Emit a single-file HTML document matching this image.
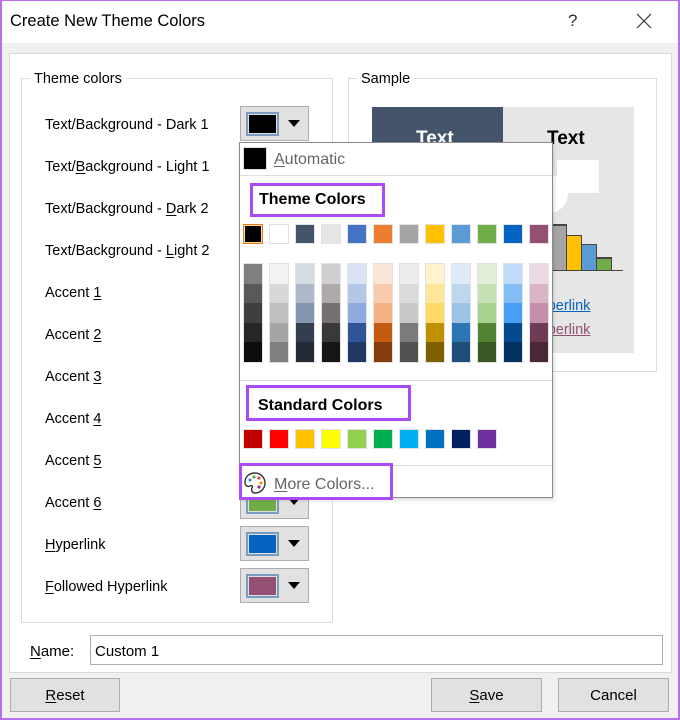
<!DOCTYPE html>
<html><head><meta charset="utf-8"><style>
*{margin:0;padding:0;box-sizing:border-box}
body{width:680px;height:720px;overflow:hidden;background:#f0f0f0;font-family:"Liberation Sans",sans-serif;font-size:14.5px;color:#000;position:relative}
.a{position:absolute}
.frame{left:0;top:0;width:680px;height:720px;border:2px solid #b56ff0;border-top-width:1px}
u{text-decoration:underline;text-underline-offset:2px}
.lbl{position:absolute;left:45px;white-space:nowrap}
.btn{position:absolute;left:240px;width:69px;height:35px;background:#e1e1e1;border:1px solid #adadad}
.btn .sw{position:absolute;left:5px;top:5px;width:33px;height:24px;border:2px solid #7a9cc0;}
.btn .sw i{position:absolute;left:1px;top:1px;right:1px;bottom:1px;border:0}
.btn .ar{position:absolute;left:47px;top:13px;width:0;height:0;border-left:6px solid transparent;border-right:6px solid transparent;border-top:7px solid #000}
.s{position:absolute;width:20px;height:20px;border:1px solid #e2e2e2}
.col{position:absolute;top:263px;width:20px;height:100px;border:1px solid #e2e2e2}
.col i{display:block;height:19.6px}
.pb{position:absolute;border:3px solid #a94cf7}
.pushb{position:absolute;top:678px;height:34px;background:#e1e1e1;border:1px solid #adadad;text-align:center;line-height:34px;font-size:15px}
</style></head><body>
<div class="a" style="left:0;top:0;width:680px;height:43px;background:#fff"></div>
<div class="a" style="left:10px;top:12px;font-size:16.5px">Create New Theme Colors</div>
<div class="a" style="left:568px;top:11px;font-size:17px;color:#333">?</div>
<svg class="a" style="left:636px;top:13px" width="16" height="16"><path d="M1 1L15 15M15 1L1 15" stroke="#333" stroke-width="1.2"/></svg>

<div class="a" style="left:9px;top:53px;width:663px;height:620px;background:#fff;border:1px solid #d9d9d9"></div>
<div class="a" style="left:21px;top:78px;width:312px;height:545px;border:1px solid #dcdcdc"></div>
<div class="a" style="left:30px;top:71px;background:#fff;padding:0 4px">Theme colors</div>
<div class="a" style="left:348px;top:78px;width:309px;height:294px;border:1px solid #dcdcdc"></div>
<div class="a" style="left:357px;top:71px;background:#fff;padding:0 4px">Sample</div>

<!-- sample preview -->
<div class="a" style="left:372px;top:107px;width:131px;height:246px;background:#44546a"></div>
<div class="a" style="left:503px;top:107px;width:131px;height:246px;background:#e7e6e6"></div>
<div class="a" style="left:416px;top:128px;color:#fff;font-weight:bold;font-size:19px">Text</div>
<div class="a" style="left:547px;top:128px;font-weight:bold;font-size:19px">Text</div>
<div class="a" style="left:557px;top:160px;width:42px;height:33px;background:#fff"></div>
<div class="a" style="left:530px;top:175px;width:38px;height:38px;border-radius:50%;background:#fff"></div>
<div class="a" style="left:548px;top:224px;width:19px;height:47px;background:#a5a5a5;border:1px solid #444;border-top-width:2px"></div>
<div class="a" style="left:566px;top:235px;width:16px;height:36px;background:#ffc000;border:1px solid #444"></div>
<div class="a" style="left:581px;top:244px;width:16px;height:27px;background:#5b9bd5;border:1px solid #444"></div>
<div class="a" style="left:596px;top:257px;width:16px;height:14px;background:#70ad47;border:1px solid #444;border-top-width:2px"></div>
<div class="a" style="left:540px;top:270px;width:83px;height:1px;background:#444"></div>
<div class="a" style="left:530px;top:298px;color:#0563c1;text-decoration:underline">Hyperlink</div>
<div class="a" style="left:530px;top:322px;color:#954f72;text-decoration:underline">Hyperlink</div>

<!-- labels -->
<div class="lbl" style="top:117px">Text/Background - Dark 1</div>
<div class="lbl" style="top:159px">Text/<u>B</u>ackground - Light 1</div>
<div class="lbl" style="top:201px">Text/Background - <u>D</u>ark 2</div>
<div class="lbl" style="top:243px">Text/Background - <u>L</u>ight 2</div>
<div class="lbl" style="top:285px">Accent <u>1</u></div>
<div class="lbl" style="top:327px">Accent <u>2</u></div>
<div class="lbl" style="top:369px">Accent <u>3</u></div>
<div class="lbl" style="top:411px">Accent <u>4</u></div>
<div class="lbl" style="top:453px">Accent <u>5</u></div>
<div class="lbl" style="top:495px">Accent <u>6</u></div>
<div class="lbl" style="top:537px"><u>H</u>yperlink</div>
<div class="lbl" style="top:579px"><u>F</u>ollowed Hyperlink</div>

<div class="btn" style="top:106px"><div class="sw"><i style="background:#000"></i></div><div class="ar"></div></div>
<div class="btn" style="top:484px"><div class="sw"><i style="background:#70ad47"></i></div><div class="ar"></div></div>
<div class="btn" style="top:526px"><div class="sw"><i style="background:#0563c1"></i></div><div class="ar"></div></div>
<div class="btn" style="top:568px"><div class="sw"><i style="background:#954f72"></i></div><div class="ar"></div></div>

<!-- dropdown -->
<div class="a" style="left:239px;top:142px;width:314px;height:356px;background:#fff;border:1px solid #8a8a8a;box-shadow:1px 2px 3px rgba(0,0,0,.15)"></div>
<div class="a" style="left:243px;top:147px;width:24px;height:23px;background:#000;border:1px solid #ddd"></div>
<div class="a" style="left:274px;top:151px;font-size:16px;color:#666"><u>A</u>utomatic</div>
<div class="a" style="left:240px;top:175px;width:312px;height:1px;background:#ddd"></div>
<div class="pb" style="left:250px;top:183px;width:135px;height:34px"></div>
<div class="a" style="left:259px;top:191px;font-weight:bold;font-size:16px">Theme Colors</div>

<div class="s" style="left:243px;top:224px;background:#000;border:1px solid #e87722;box-shadow:inset 0 0 0 1px #ffe08a"></div>
<div class="s" style="left:269px;top:224px;background:#fff"></div>
<div class="s" style="left:295px;top:224px;background:#44546a"></div>
<div class="s" style="left:321px;top:224px;background:#e7e6e6"></div>
<div class="s" style="left:347px;top:224px;background:#4472c4"></div>
<div class="s" style="left:373px;top:224px;background:#ed7d31"></div>
<div class="s" style="left:399px;top:224px;background:#a5a5a5"></div>
<div class="s" style="left:425px;top:224px;background:#ffc000"></div>
<div class="s" style="left:451px;top:224px;background:#5b9bd5"></div>
<div class="s" style="left:477px;top:224px;background:#70ad47"></div>
<div class="s" style="left:503px;top:224px;background:#0563c1"></div>
<div class="s" style="left:529px;top:224px;background:#954f72"></div>

<div class="col" style="left:243px"><i style="background:#7f7f7f"></i><i style="background:#595959"></i><i style="background:#3f3f3f"></i><i style="background:#262626"></i><i style="background:#0d0d0d"></i></div>
<div class="col" style="left:269px"><i style="background:#f2f2f2"></i><i style="background:#d8d8d8"></i><i style="background:#bfbfbf"></i><i style="background:#a5a5a5"></i><i style="background:#7f7f7f"></i></div>
<div class="col" style="left:295px"><i style="background:#d6dce4"></i><i style="background:#adb9ca"></i><i style="background:#8497b0"></i><i style="background:#333f4f"></i><i style="background:#222a35"></i></div>
<div class="col" style="left:321px"><i style="background:#d0cece"></i><i style="background:#aeaaaa"></i><i style="background:#757171"></i><i style="background:#3a3838"></i><i style="background:#171616"></i></div>
<div class="col" style="left:347px"><i style="background:#dae3f3"></i><i style="background:#b4c7e7"></i><i style="background:#8faadc"></i><i style="background:#2f5597"></i><i style="background:#203864"></i></div>
<div class="col" style="left:373px"><i style="background:#fbe5d6"></i><i style="background:#f8cbad"></i><i style="background:#f4b183"></i><i style="background:#c55a11"></i><i style="background:#843c0c"></i></div>
<div class="col" style="left:399px"><i style="background:#ededed"></i><i style="background:#dbdbdb"></i><i style="background:#c9c9c9"></i><i style="background:#7b7b7b"></i><i style="background:#525252"></i></div>
<div class="col" style="left:425px"><i style="background:#fff2cc"></i><i style="background:#ffe699"></i><i style="background:#ffd966"></i><i style="background:#bf9000"></i><i style="background:#7f6000"></i></div>
<div class="col" style="left:451px"><i style="background:#deebf7"></i><i style="background:#bdd7ee"></i><i style="background:#9dc3e6"></i><i style="background:#2e75b6"></i><i style="background:#1f4e79"></i></div>
<div class="col" style="left:477px"><i style="background:#e2f0d9"></i><i style="background:#c5e0b4"></i><i style="background:#a9d18e"></i><i style="background:#548235"></i><i style="background:#385723"></i></div>
<div class="col" style="left:503px"><i style="background:#c1dcfa"></i><i style="background:#83bdf6"></i><i style="background:#469ef6"></i><i style="background:#044a91"></i><i style="background:#023160"></i></div>
<div class="col" style="left:529px"><i style="background:#ebd9e3"></i><i style="background:#d8b4c6"></i><i style="background:#c58ea9"></i><i style="background:#703b55"></i><i style="background:#4a2739"></i></div>

<div class="a" style="left:240px;top:380px;width:312px;height:1px;background:#ddd"></div>
<div class="pb" style="left:246px;top:385px;width:165px;height:36px"></div>
<div class="a" style="left:258px;top:397px;font-weight:bold;font-size:16px">Standard Colors</div>
<div class="s" style="left:243px;top:429px;background:#c00000"></div>
<div class="s" style="left:269px;top:429px;background:#ff0000"></div>
<div class="s" style="left:295px;top:429px;background:#ffc000"></div>
<div class="s" style="left:321px;top:429px;background:#ffff00"></div>
<div class="s" style="left:347px;top:429px;background:#92d050"></div>
<div class="s" style="left:373px;top:429px;background:#00b050"></div>
<div class="s" style="left:399px;top:429px;background:#00b0f0"></div>
<div class="s" style="left:425px;top:429px;background:#0070c0"></div>
<div class="s" style="left:451px;top:429px;background:#002060"></div>
<div class="s" style="left:477px;top:429px;background:#7030a0"></div>
<div class="a" style="left:240px;top:465px;width:312px;height:1px;background:#ddd"></div>
<div class="pb" style="left:239px;top:463px;width:154px;height:37px"></div>
<svg class="a" style="left:243px;top:471px" width="24" height="24" viewBox="0 0 24 24"><path d="M12 2C6 2 2 6 2 11c0 4 3 5 5 4 2-1 3 0 2 2-1 2 0 5 3 5 6 0 10-5 10-10S18 2 12 2z" fill="none" stroke="#333" stroke-width="1.4"/><circle cx="7" cy="9" r="1.6" fill="#3b8fe0"/><circle cx="11" cy="6" r="1.6" fill="#4caf50"/><circle cx="16" cy="7" r="1.6" fill="#f44336"/><circle cx="18" cy="12" r="1.6" fill="#ff9800"/><circle cx="16" cy="16" r="1.6" fill="#9c27b0"/></svg>
<div class="a" style="left:274px;top:476px;font-size:16px;color:#666"><u>M</u>ore Colors...</div>

<!-- name -->
<div class="a" style="left:30px;top:643px;font-size:15px"><u>N</u>ame:</div>
<div class="a" style="left:90px;top:635px;width:573px;height:30px;border:1px solid #adadad;background:#fff;padding:7px 4px;font-size:15px">Custom 1</div>

<div class="pushb" style="left:10px;width:110px"><u>R</u>eset</div>
<div class="pushb" style="left:431px;width:111px"><u>S</u>ave</div>
<div class="pushb" style="left:558px;width:111px">Cancel</div>
<div class="a frame"></div>
</body></html>
